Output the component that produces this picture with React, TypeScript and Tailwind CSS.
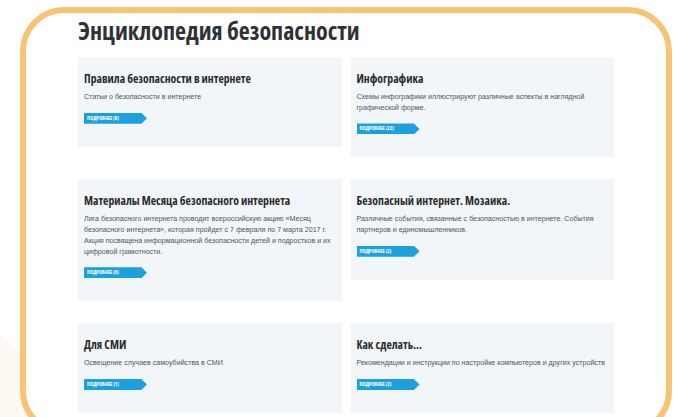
type Topic = {
  title: string;
  text: string;
  count: number;
};

const topics: Topic[] = [
  {
    title: "Правила безопасности в интернете",
    text: "Статьи о безопасности в интернете",
    count: 8,
  },
  {
    title: "Инфографика",
    text: "Схемы инфографики иллюстрируют различные аспекты в наглядной графической форме.",
    count: 22,
  },
  {
    title: "Материалы Месяца безопасного интернета",
    text: "Лига безопасного интернета проводит всероссийскую акцию «Месяц безопасного интернета», которая пройдет с 7 февраля по 7 марта 2017 г. Акция посвящена информационной безопасности детей и подростков и их цифровой грамотности.",
    count: 9,
  },
  {
    title: "Безопасный интернет. Мозаика.",
    text: "Различные события, связанные с безопасностью в интернете. События партнеров и единомышленников.",
    count: 2,
  },
  {
    title: "Для СМИ",
    text: "Освещение случаев самоубийства в СМИ.",
    count: 1,
  },
  {
    title: "Как сделать...",
    text: "Рекомендации и инструкции по настройке компьютеров и других устройств",
    count: 2,
  },
];

// condensed headline face
const narrow = "font-['Open_Sans',sans-serif] [font-stretch:75%]";

function MoreButton({ count }: { count: number }) {
  return (
    <a
      href="#"
      className={`${narrow} flex h-[11px] w-[63px] items-center bg-[#1da1de] pl-[3px] text-[5.3px] font-bold uppercase leading-none text-white [clip-path:polygon(0_0,91%_0,100%_50%,91%_100%,0_100%)]`}
    >
      Подробнее ({count})
    </a>
  );
}

function TopicCard({ topic }: { topic: Topic }) {
  return (
    <div className="bg-[#f2f6f9] pl-[6px] pr-[2px] pt-[13px] pb-[23px]">
      <h3 className={`${narrow} text-[11.7px] font-bold leading-[16px] text-[#2a2b2d]`}>
        {topic.title}
      </h3>
      <p className="mt-[6px] font-['Liberation_Sans',Arial,sans-serif] text-[7.1px] leading-[10.7px] text-[#50555a]">
        {topic.text}
      </p>
      <div className="mt-[10px]">
        <MoreButton count={topic.count} />
      </div>
    </div>
  );
}

export default function App() {
  return (
    <div className="relative h-[417px] w-full overflow-hidden bg-white">
      {/* soft background blob on the left */}
      <div className="absolute left-[-260px] top-[300px] h-[320px] w-[320px] rounded-full bg-[#fdf8f0]" />

      <div className="relative ml-[20px] mt-[7px] h-[428px] w-[652px] rounded-[44px] border-[6px] border-[#f8c473] bg-white">
        <div className="mx-auto w-[536px] pt-[4px]">
          <h1 className={`${narrow} mb-[12px] text-[24px] font-bold leading-[28px] text-[#2e3136]`}>
            Энциклопедия безопасности
          </h1>
          <div className="grid grid-cols-2 items-start gap-x-[9px] gap-y-[22px]">
            {topics.map((t) => (
              <TopicCard key={t.title} topic={t} />
            ))}
          </div>
        </div>
      </div>
    </div>
  );
}
